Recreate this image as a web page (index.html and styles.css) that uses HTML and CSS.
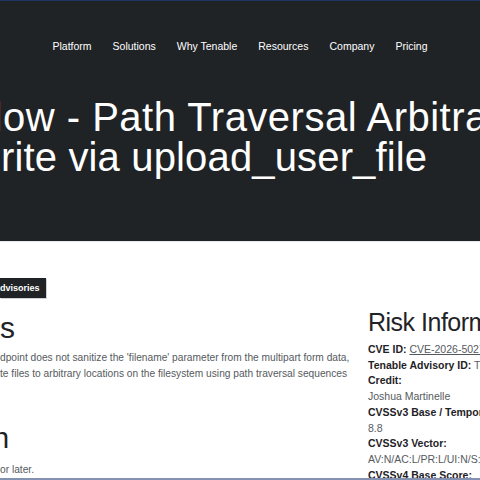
FILE: index.html
```html
<!DOCTYPE html>
<html lang="en">
<head>
<meta charset="utf-8">
<title>MLflow - Path Traversal Arbitrary File Write via upload_user_file</title>
<link rel="stylesheet" href="styles.css">
</head>
<body>
<header class="hero">
  <nav class="nav">
    <a class="nav-item">Platform</a>
    <a class="nav-item">Solutions</a>
    <a class="nav-item">Why Tenable</a>
    <a class="nav-item">Resources</a>
    <a class="nav-item">Company</a>
    <a class="nav-item">Pricing</a>
  </nav>
  <h1 class="title">
    <span class="line line-first"><span class="lead">MLfl</span>ow - Path Traversal Arbitrary File</span>
    <span class="line"><span class="lead lead-shift">W</span>rite via upload_user_file</span>
  </h1>
</header>
<main class="main">
  <section class="left">
    <div class="tag"><span class="lead"><span class="tag-hidden">Research A</span></span>dvisories</div>
    <h2 class="heading syn"><span class="lead">Synopsi</span>s</h2>
    <p class="desc">
      <span class="line"><span class="lead">The upload_user_file en</span>dpoint does not sanitize the 'filename' parameter from the multipart form data,</span>
      <span class="line"><span class="lead">allowing an authenticated user to wri</span>te files to arbitrary locations on the filesystem using path traversal sequences</span>
    </p>
    <h2 class="heading sol"><span class="lead">Solutio</span>n</h2>
    <p class="desc fix"><span class="line"><span class="lead">Upgrade to the latest version </span>or later.</span></p>
  </section>
  <aside class="risk">
    <h2 class="risk-title">Risk Information</h2>
    <div class="facts">
      <p class="fact"><b class="label">CVE ID:</b> <a class="cve">CVE-2026-5027</a></p>
      <p class="fact"><b class="label">Tenable Advisory ID:</b> TRA-2026-17</p>
      <p class="fact"><b class="label">Credit:</b></p>
      <p class="fact">Joshua Martinelle</p>
      <p class="fact"><b class="label">CVSSv3 Base / Temporal Score:</b></p>
      <p class="fact">8.8</p>
      <p class="fact"><b class="label">CVSSv3 Vector:</b></p>
      <p class="fact">AV:N/AC:L/PR:L/UI:N/S:U/C:H/I:H/A:H</p>
      <p class="fact"><b class="label">CVSSv4 Base Score:</b></p>
    </div>
  </aside>
</main>
<div class="edge"></div>
</body>
</html>
```

FILE: styles.css
```css
html {
  overflow: hidden;
}
body {
  margin: 0;
  background: #ffffff;
  font-family: "Liberation Sans", Arial, sans-serif;
  color: #1f2326;
  overflow: hidden;
}

.lead {
  display: inline-flex;
  width: 0;
  justify-content: flex-end;
  white-space: nowrap;
}
.lead-shift {
  margin-left: -5px;
  margin-right: 5px;
}

.hero {
  background: #1f2326;
  border-top: 1px solid #1b3762;
  border-bottom: 1px solid #e6e7e8;
  padding: 37px 0 64px;
  overflow: hidden;
}
.nav {
  display: flex;
  justify-content: center;
  gap: 21px;
  font-size: 10.5px;
  line-height: 16px;
  color: #ffffff;
}
.nav-item {
  color: #ffffff;
  text-decoration: none;
}
.title {
  margin: 43px 0 0;
  padding-left: 1px;
  font-size: 40px;
  line-height: 40px;
  font-weight: 400;
  letter-spacing: 0.15px;
  color: #ffffff;
  white-space: nowrap;
}
.line {
  display: block;
  white-space: nowrap;
}
.line-first {
  margin-left: 2px;
  letter-spacing: 0.5px;
}

.main {
  display: grid;
  grid-template-columns: 340px auto;
  column-gap: 28px;
  padding-top: 35px;
  overflow: hidden;
}
.left {
  min-width: 0;
}
.tag {
  display: inline-block;
  background: #1f2326;
  color: #ffffff;
  font-size: 9px;
  font-weight: 700;
  line-height: 20px;
  padding: 0 6px 0 0;
  box-shadow: 1px 1px 0 #cfd1d3;
}
.tag-hidden {
  background: #1f2326;
  padding-left: 8px;
}
.heading {
  margin: 0;
  font-weight: 400;
  font-size: 30px;
  line-height: 36px;
  color: #1f2326;
}
.syn {
  margin-top: 12px;
}
.sol {
  margin: 39px 0 0 -7px;
  font-size: 29px;
}
.desc {
  margin: 4px 0 0;
  font-size: 10.2px;
  line-height: 15.5px;
  color: #555a5e;
}
.fix {
  margin-top: 6px;
}

.risk {
  min-width: 0;
  white-space: nowrap;
}
.risk-title {
  margin: 30px 0 0;
  font-size: 25px;
  line-height: 30px;
  font-weight: 400;
  letter-spacing: -0.5px;
  color: #1f2326;
}
.facts {
  margin-top: 5px;
}
.fact {
  margin: 0;
  font-size: 10.5px;
  line-height: 15.7px;
  color: #555a5e;
}
.label {
  color: #1f2326;
  font-weight: 700;
}
.cve {
  color: #555a5e;
  text-decoration: underline;
}

.edge {
  position: fixed;
  left: 0;
  right: 0;
  bottom: 0;
  height: 2px;
  background: #8391b3;
}
```
